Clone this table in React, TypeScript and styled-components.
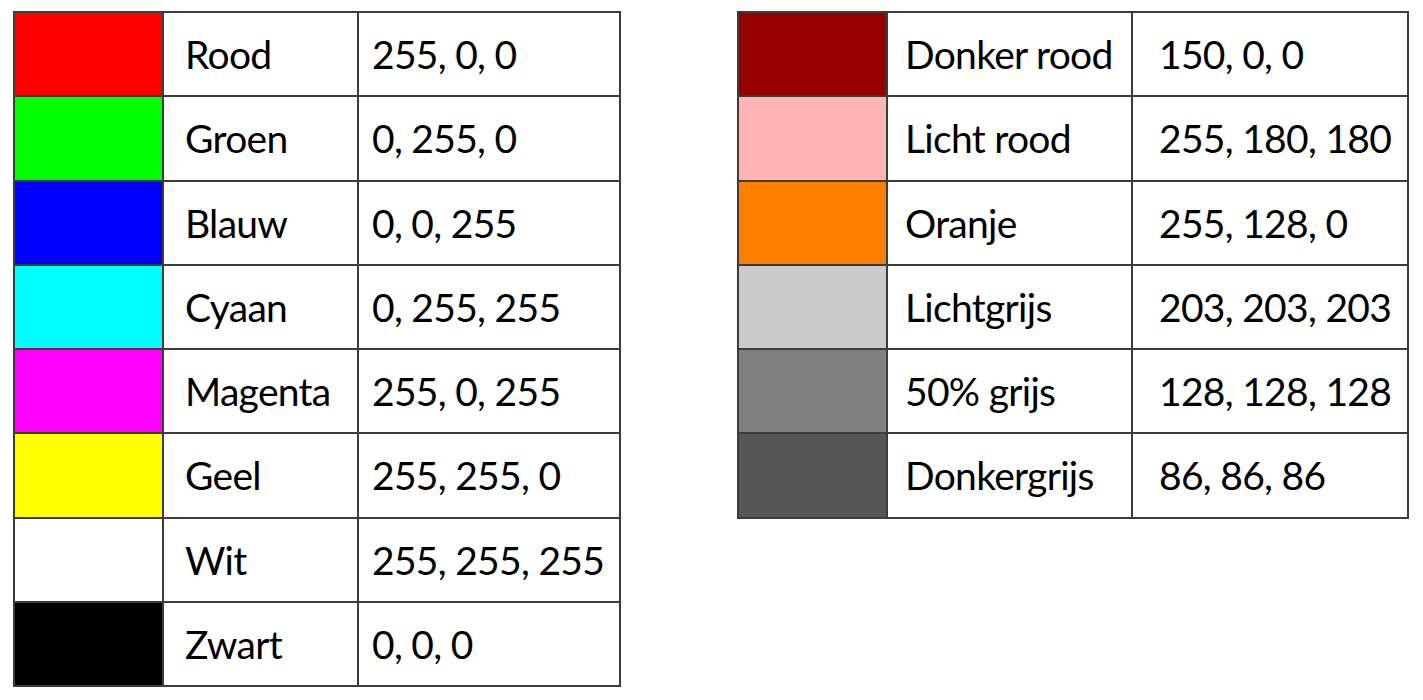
import React from "react";
import styled, { createGlobalStyle } from "styled-components";

const GlobalStyle = createGlobalStyle`
  html, body {
    margin: 0;
    padding: 0;
    background: #fff;
  }
  body {
    font-family: Lato, "Open Sans", sans-serif;
    color: #000;
  }
`;

const Page = styled.div`
  display: flex;
  align-items: flex-start;
  gap: 116px;
  padding: 11px 0 0 13px;
`;

const Table = styled.div<{ $cols: string }>`
  display: grid;
  grid-template-columns: ${(p) => p.$cols};
  grid-auto-rows: 82.25px;
  gap: 2px;
  padding: 2px;
  background: #3c3c3c;
`;

const Swatch = styled.div<{ $color: string }>`
  background: ${(p) => p.$color};
`;

const Cell = styled.div<{ $pad: number }>`
  display: flex;
  align-items: center;
  padding-left: ${(p) => p.$pad}px;
  background: #fff;
  font-size: 39px;
  letter-spacing: -0.7px;
  white-space: nowrap;
`;

interface ColorRow {
  color: string;
  name: string;
  rgb: string;
}

const basic: ColorRow[] = [
  { color: "#ff0000", name: "Rood", rgb: "255, 0, 0" },
  { color: "#00ff00", name: "Groen", rgb: "0, 255, 0" },
  { color: "#0000ff", name: "Blauw", rgb: "0, 0, 255" },
  { color: "#00ffff", name: "Cyaan", rgb: "0, 255, 255" },
  { color: "#ff00ff", name: "Magenta", rgb: "255, 0, 255" },
  { color: "#ffff00", name: "Geel", rgb: "255, 255, 0" },
  { color: "#ffffff", name: "Wit", rgb: "255, 255, 255" },
  { color: "#000000", name: "Zwart", rgb: "0, 0, 0" },
];

const extra: ColorRow[] = [
  { color: "#960000", name: "Donker rood", rgb: "150, 0, 0" },
  { color: "#ffb4b4", name: "Licht rood", rgb: "255, 180, 180" },
  { color: "#ff8000", name: "Oranje", rgb: "255, 128, 0" },
  { color: "#cbcbcb", name: "Lichtgrijs", rgb: "203, 203, 203" },
  { color: "#808080", name: "50% grijs", rgb: "128, 128, 128" },
  { color: "#565656", name: "Donkergrijs", rgb: "86, 86, 86" },
];

interface TableProps {
  rows: ColorRow[];
  cols: string;
  namePad: number;
  valuePad: number;
}

const ColorTable: React.FC<TableProps> = ({ rows, cols, namePad, valuePad }) => (
  <Table $cols={cols}>
    {rows.map((r) => (
      <React.Fragment key={r.name}>
        <Swatch $color={r.color} />
        <Cell $pad={namePad}>{r.name}</Cell>
        <Cell $pad={valuePad}>{r.rgb}</Cell>
      </React.Fragment>
    ))}
  </Table>
);

const App: React.FC = () => (
  <>
    <GlobalStyle />
    <Page>
      <ColorTable rows={basic} cols="147px 193px 260px" namePad={21} valuePad={13} />
      <ColorTable rows={extra} cols="147px 243px 274px" namePad={17} valuePad={26} />
    </Page>
  </>
);

export default App;
